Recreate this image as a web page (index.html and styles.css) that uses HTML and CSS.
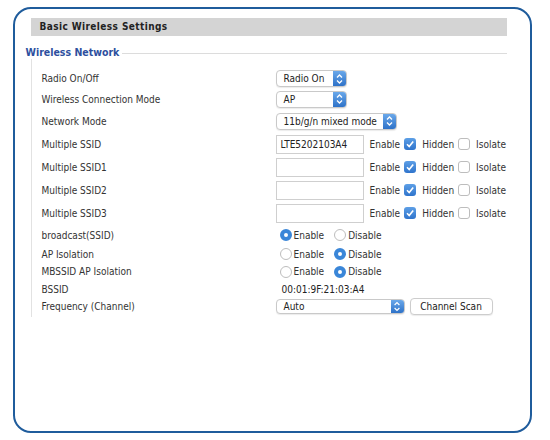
FILE: index.html
```html
<!DOCTYPE html>
<html>
<head>
<meta charset="utf-8">
<link rel="stylesheet" href="styles.css">
</head>
<body>
<div class="frame">
  <div class="header">Basic Wireless Settings</div>
  <div class="legend-row"><span class="legend">Wireless Network</span><span class="legend-line"></span></div>
  <div class="fieldset">
    <div class="row r20"><div class="label">Radio On/Off</div>
      <div class="ctrl"><div class="select w71"><span class="sel-text">Radio On</span><span class="sel-arrow"><svg width="13" height="16" viewBox="0 0 13 16"><path d="M4 6.5 L6.5 4 L9 6.5 M4 9.5 L6.5 12 L9 9.5" fill="none" stroke="#fff" stroke-width="1.3"/></svg></span></div></div></div>
    <div class="row r21"><div class="label">Wireless Connection Mode</div>
      <div class="ctrl"><div class="select w71"><span class="sel-text">AP</span><span class="sel-arrow"><svg width="13" height="16" viewBox="0 0 13 16"><path d="M4 6.5 L6.5 4 L9 6.5 M4 9.5 L6.5 12 L9 9.5" fill="none" stroke="#fff" stroke-width="1.3"/></svg></span></div></div></div>
    <div class="row r23"><div class="label">Network Mode</div>
      <div class="ctrl"><div class="select w121"><span class="sel-text">11b/g/n mixed mode</span><span class="sel-arrow"><svg width="13" height="16" viewBox="0 0 13 16"><path d="M4 6.5 L6.5 4 L9 6.5 M4 9.5 L6.5 12 L9 9.5" fill="none" stroke="#fff" stroke-width="1.3"/></svg></span></div></div></div>
    <div class="row r23"><div class="label">Multiple SSID</div>
      <div class="ctrl"><div class="input">LTE5202103A4</div>
        <span class="opt-text en">Enable</span><span class="cb on"><svg width="12" height="12" viewBox="0 0 12 12"><path d="M3 6.3 L5.2 8.6 L9.2 3.6" fill="none" stroke="#fff" stroke-width="1.6"/></svg></span>
        <span class="opt-text hid">Hidden</span><span class="cb"></span>
        <span class="opt-text iso">Isolate</span></div></div>
    <div class="row r23"><div class="label">Multiple SSID1</div>
      <div class="ctrl"><div class="input"></div>
        <span class="opt-text en">Enable</span><span class="cb on"><svg width="12" height="12" viewBox="0 0 12 12"><path d="M3 6.3 L5.2 8.6 L9.2 3.6" fill="none" stroke="#fff" stroke-width="1.6"/></svg></span>
        <span class="opt-text hid">Hidden</span><span class="cb"></span>
        <span class="opt-text iso">Isolate</span></div></div>
    <div class="row r23"><div class="label">Multiple SSID2</div>
      <div class="ctrl"><div class="input"></div>
        <span class="opt-text en">Enable</span><span class="cb on"><svg width="12" height="12" viewBox="0 0 12 12"><path d="M3 6.3 L5.2 8.6 L9.2 3.6" fill="none" stroke="#fff" stroke-width="1.6"/></svg></span>
        <span class="opt-text hid">Hidden</span><span class="cb"></span>
        <span class="opt-text iso">Isolate</span></div></div>
    <div class="row r23"><div class="label">Multiple SSID3</div>
      <div class="ctrl"><div class="input"></div>
        <span class="opt-text en">Enable</span><span class="cb on"><svg width="12" height="12" viewBox="0 0 12 12"><path d="M3 6.3 L5.2 8.6 L9.2 3.6" fill="none" stroke="#fff" stroke-width="1.6"/></svg></span>
        <span class="opt-text hid">Hidden</span><span class="cb"></span>
        <span class="opt-text iso">Isolate</span></div></div>
    <div class="row r21"><div class="label">broadcast(SSID)</div>
      <div class="ctrl radios"><span class="radio on"></span><span class="r-text">Enable</span><span class="radio"></span><span class="r-text">Disable</span></div></div>
    <div class="row r17"><div class="label">AP Isolation</div>
      <div class="ctrl radios"><span class="radio"></span><span class="r-text">Enable</span><span class="radio on"></span><span class="r-text">Disable</span></div></div>
    <div class="row r18"><div class="label">MBSSID AP Isolation</div>
      <div class="ctrl radios"><span class="radio"></span><span class="r-text">Enable</span><span class="radio on"></span><span class="r-text">Disable</span></div></div>
    <div class="row r17"><div class="label">BSSID</div>
      <div class="ctrl"><span class="bssid">00:01:9F:21:03:A4</span></div></div>
    <div class="row r18"><div class="label">Frequency (Channel)</div>
      <div class="ctrl"><div class="select w129 short"><span class="sel-text">Auto</span><span class="sel-arrow"><svg width="12" height="15" viewBox="0 0 12 15"><path d="M3.6 6 L6 3.6 L8.4 6 M3.6 9 L6 11.4 L8.4 9" fill="none" stroke="#fff" stroke-width="1.2"/></svg></span></div>
        <div class="button">Channel Scan</div></div></div>
  </div>
</div>
</body>
</html>
```
FILE: styles.css
```css
html, body {
  margin: 0;
  padding: 0;
  background: #fff;
}
body {
  font-family: "DejaVu Sans Condensed", "DejaVu Sans", sans-serif;
  font-size: 10px;
  color: #333;
}
.frame {
  box-sizing: border-box;
  width: 519px;
  height: 426px;
  margin: 7px 0 0 13px;
  border: 2.5px solid #1f5c9c;
  border-radius: 18px;
  padding: 8.5px 23.5px 0 15.5px;
}
.header {
  height: 18px;
  line-height: 18px;
  background: #d4d4d4;
  padding-left: 9px;
  font-weight: bold;
  font-size: 10px;
  letter-spacing: 0.4px;
  color: #222;
}
.legend-row {
  display: flex;
  align-items: center;
  height: 14px;
  margin-top: 9px;
  margin-left: -5px;
}
.legend {
  color: #2d4f9e;
  font-weight: bold;
  font-size: 10.5px;
  padding-right: 3px;
}
.legend-line {
  flex: 1;
  height: 1px;
  background: #dcdcdc;
  margin-top: 3px;
}
.fieldset {
  border-left: 1px solid #e2e2e2;
  padding-top: 10px;
  padding-bottom: 1px;
}
.row {
  display: flex;
  align-items: center;
}
.r17 { height: 17px; }
.r18 { height: 18px; }
.r20 { height: 20px; }
.r21 { height: 21px; }
.r22 { height: 22px; }
.r23 { height: 23px; }
.label {
  flex-shrink: 0;
  width: 234px;
  padding-left: 10px;
  color: #333;
}
.ctrl {
  display: flex;
  align-items: center;
}
.select {
  box-sizing: border-box;
  display: flex;
  height: 17px;
  border: 1px solid #c9c9c9;
  border-radius: 4px;
  background: #fff;
  box-shadow: 0 1px 1px rgba(0,0,0,0.08);
  overflow: hidden;
}
.select.short { height: 15px; }
.w71 { width: 71px; }
.w121 { width: 121px; }
.w129 { width: 129px; }
.sel-text {
  flex: 1;
  padding-left: 7px;
  display: flex;
  align-items: center;
  color: #222;
}
.sel-arrow {
  width: 13px;
  display: flex;
  align-items: center;
  justify-content: center;
  background: linear-gradient(#6aa8ea, #2e72c8);
}
.input {
  box-sizing: border-box;
  flex-shrink: 0;
  width: 88px;
  height: 19px;
  border: 1px solid #cfcfcf;
  background: #fff;
  padding-left: 4px;
  line-height: 17px;
  color: #222;
}
.opt-text { color: #333; }
.en { margin-left: 6px; }
.hid { margin-left: 6px; }
.iso { margin-left: 6px; }
.cb {
  box-sizing: border-box;
  flex-shrink: 0;
  width: 12px;
  height: 12px;
  margin-left: 4px;
  border: 1px solid #bdbdbd;
  border-radius: 3px;
  background: #fff;
  display: flex;
}
.cb.on {
  border: none;
  background: linear-gradient(#5d9fe6, #2f74cc);
}
.radios { padding-left: 4px; }
.radio {
  box-sizing: border-box;
  width: 12px;
  height: 12px;
  border-radius: 50%;
  border: 1px solid #bdbdbd;
  background: #fff;
}
.radio.on {
  border: 4px solid #3a86d8;
  background: #fff;
}
.r-text {
  margin-left: 2px;
  margin-right: 10px;
  color: #333;
}
.bssid {
  padding-left: 6px;
  color: #222;
}
.button {
  box-sizing: border-box;
  width: 83px;
  height: 17px;
  margin-left: 5px;
  border: 1px solid #cdcdcd;
  border-radius: 4px;
  background: #fff;
  box-shadow: 0 1px 1px rgba(0,0,0,0.08);
  text-align: center;
  line-height: 15px;
  color: #222;
}
```
